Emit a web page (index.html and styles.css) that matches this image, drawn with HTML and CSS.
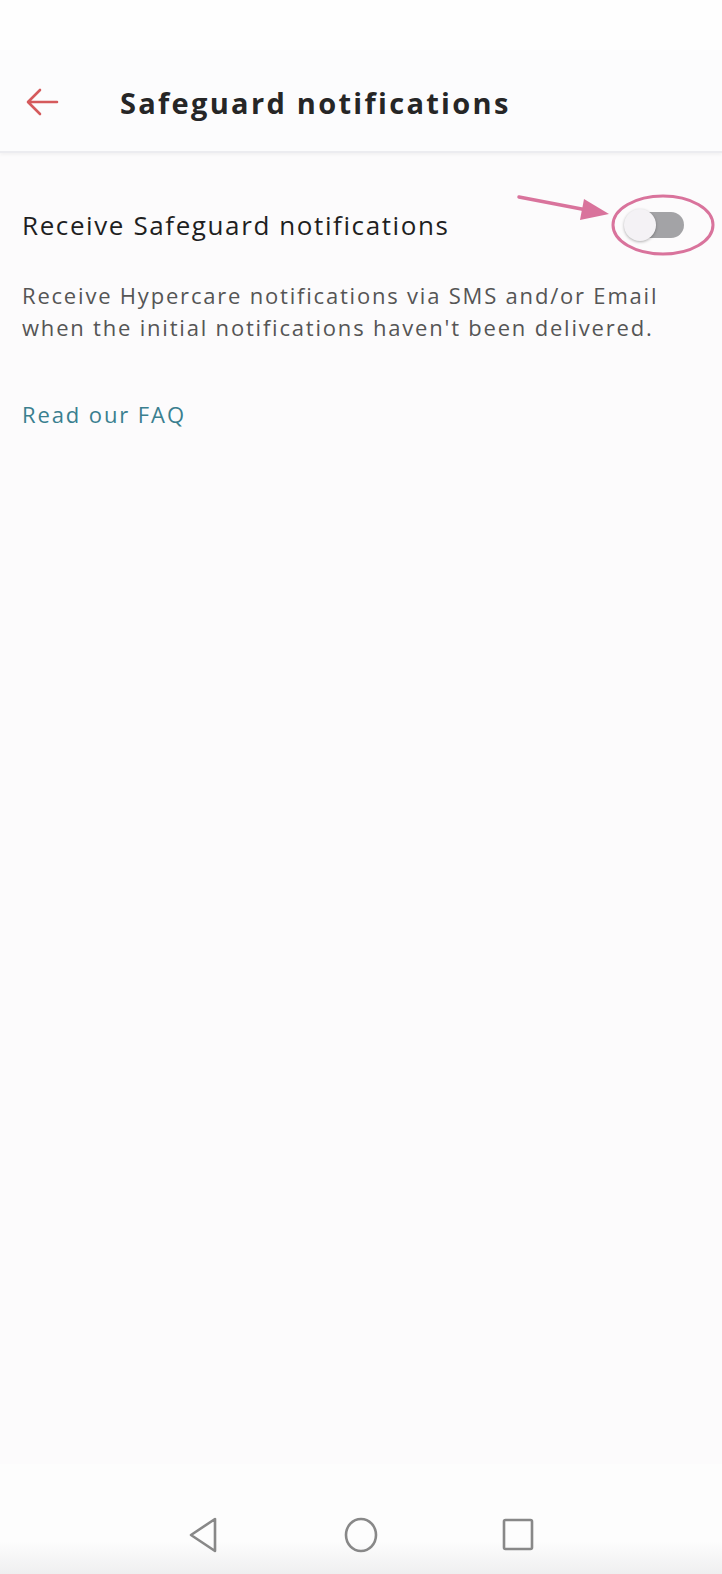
FILE: index.html
```html
<!DOCTYPE html>
<html lang="en">
<head>
    <meta charset="UTF-8">
    <meta name="viewport" content="width=device-width, initial-scale=1.0">
    <title>Safeguard notifications</title>
    <link rel="stylesheet" href="styles.css">
</head>
<body>
    <div class="status-bar"></div>

    <header class="app-bar">
        <a href="#" class="back">
            <svg width="34" height="30" viewBox="0 0 34 30">
                <path d="M32 15 H4 M15 3 L3 15 L15 27" fill="none" stroke="#d55a5c" stroke-width="2.6" stroke-linecap="round" stroke-linejoin="round"/>
            </svg>
        </a>
        <h1>Safeguard notifications</h1>
    </header>

    <main class="content">
        <div class="setting-row">
            <span class="setting-label">Receive Safeguard notifications</span>
            <div class="toggle-wrap">
                <div class="toggle">
                    <span class="thumb"></span>
                </div>
                <!-- annotation drawn on the screenshot -->
                <svg class="annotation" width="220" height="80" viewBox="0 0 220 80">
                    <path d="M5 10 L78 24" stroke="#d9739c" stroke-width="3.5" stroke-linecap="round"/>
                    <path d="M70 12 L95 27 L66 33 Z" fill="#d9739c"/>
                    <ellipse cx="149" cy="38" rx="50" ry="29" fill="none" stroke="#d9739c" stroke-width="3"/>
                </svg>
            </div>
        </div>

        <p class="setting-desc">Receive Hypercare notifications via SMS and/or Email when the initial notifications haven't been delivered.</p>

        <a href="#" class="faq-link">Read our FAQ</a>
    </main>

    <nav class="nav-bar">
        <svg width="34" height="40" viewBox="0 0 34 40">
            <path d="M28 4 L28 36 L4 20 Z" fill="none" stroke="#888" stroke-width="2.6" stroke-linejoin="round"/>
        </svg>
        <svg width="36" height="40" viewBox="0 0 36 40">
            <ellipse cx="18" cy="20" rx="15" ry="16" fill="none" stroke="#888" stroke-width="2.6"/>
        </svg>
        <svg width="34" height="40" viewBox="0 0 34 40">
            <rect x="3" y="5" width="28" height="29" rx="1.5" fill="none" stroke="#888" stroke-width="2.6"/>
        </svg>
    </nav>
</body>
</html>
```

FILE: styles.css
```css
body {
    font-family: "Open Sans", Arial, sans-serif;
    background-color: #fcfbfc;
    margin: 0;
    min-height: 100vh;
    display: flex;
    flex-direction: column;
    color: #222;
}

.status-bar {
    height: 50px;
    background-color: #fefefe;
}

.app-bar {
    height: 101px;
    display: flex;
    align-items: center;
    background-color: #fcfcfd;
    border-bottom: 2px solid #ececf0;
    box-shadow: 0 2px 3px rgba(0, 0, 0, 0.04);
}

.back {
    display: flex;
    width: 34px;
    margin-left: 25px;
    margin-right: 61px;
    margin-top: 2px;
}

.app-bar h1 {
    margin: 4px 0 0;
    font-size: 29px;
    font-weight: 700;
    color: #262626;
    letter-spacing: 2.3px;
}

.content {
    flex-grow: 1;
    padding: 0 22px;
}

.setting-row {
    display: flex;
    justify-content: space-between;
    align-items: center;
    margin-top: 50px;
    height: 44px;
}

.setting-label {
    font-size: 26px;
    color: #1f1f1f;
    letter-spacing: 1.6px;
}

.toggle-wrap {
    position: relative;
    width: 58px;
    margin-right: 16px;
}

.toggle {
    position: relative;
    width: 58px;
    height: 26px;
    border-radius: 13px;
    background-color: #a3a3a6;
}

.thumb {
    position: absolute;
    left: -2px;
    top: -3px;
    width: 32px;
    height: 32px;
    border-radius: 50%;
    background-color: #f4f2f5;
    box-shadow: 0 1px 3px rgba(0, 0, 0, 0.3);
}

.annotation {
    position: absolute;
    left: -112px;
    top: -25px;
}

.setting-desc {
    margin: 32px 0 0;
    font-size: 22px;
    line-height: 32px;
    color: #555;
    letter-spacing: 1.8px;
}

.faq-link {
    display: inline-block;
    margin-top: 56px;
    font-size: 22px;
    color: #3a7f8f;
    text-decoration: none;
    letter-spacing: 1.9px;
}

.nav-bar {
    height: 110px;
    display: flex;
    justify-content: center;
    align-items: center;
    gap: 122px;
    padding-top: 32px;
    box-sizing: border-box;
    background: linear-gradient(to bottom, #fdfdfd 70%, #efeff0 100%);
}
```
